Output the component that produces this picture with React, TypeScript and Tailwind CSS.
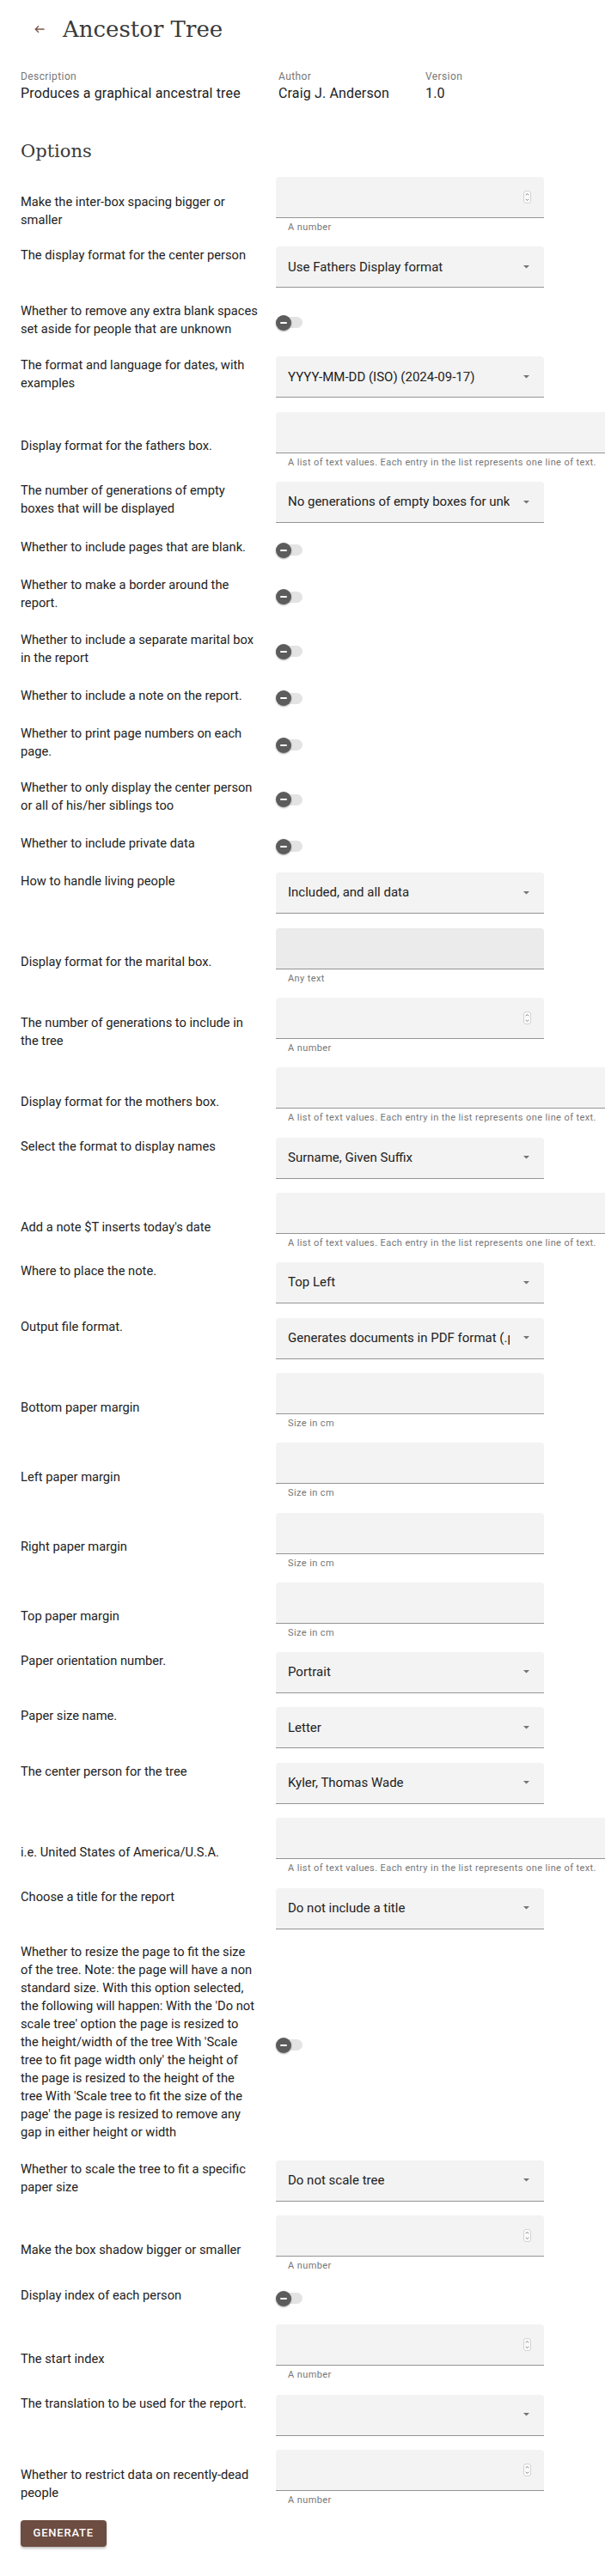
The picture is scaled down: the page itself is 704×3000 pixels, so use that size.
type Row =
  | { kind: "select"; label: string[]; value: string }
  | { kind: "switch"; label: string[] }
  | { kind: "text"; label: string[]; helper: string; wide?: boolean; hover?: boolean }
  | { kind: "number"; label: string[]; helper: string };

const LIST_HELP = "A list of text values. Each entry in the list represents one line of text.";

const ROWS: Row[] = [
  { kind: "number", label: ["Make the inter-box spacing bigger or", "smaller"], helper: "A number" },
  { kind: "select", label: ["The display format for the center person"], value: "Use Fathers Display format" },
  { kind: "switch", label: ["Whether to remove any extra blank spaces", "set aside for people that are unknown"] },
  { kind: "select", label: ["The format and language for dates, with", "examples"], value: "YYYY-MM-DD (ISO) (2024-09-17)" },
  { kind: "text", label: ["Display format for the fathers box."], helper: LIST_HELP, wide: true },
  {
    kind: "select",
    label: ["The number of generations of empty", "boxes that will be displayed"],
    value: "No generations of empty boxes for unknown ancestors",
  },
  { kind: "switch", label: ["Whether to include pages that are blank."] },
  { kind: "switch", label: ["Whether to make a border around the", "report."] },
  { kind: "switch", label: ["Whether to include a separate marital box", "in the report"] },
  { kind: "switch", label: ["Whether to include a note on the report."] },
  { kind: "switch", label: ["Whether to print page numbers on each", "page."] },
  { kind: "switch", label: ["Whether to only display the center person", "or all of his/her siblings too"] },
  { kind: "switch", label: ["Whether to include private data"] },
  { kind: "select", label: ["How to handle living people"], value: "Included, and all data" },
  { kind: "text", label: ["Display format for the marital box."], helper: "Any text", hover: true },
  { kind: "number", label: ["The number of generations to include in", "the tree"], helper: "A number" },
  { kind: "text", label: ["Display format for the mothers box."], helper: LIST_HELP, wide: true },
  { kind: "select", label: ["Select the format to display names"], value: "Surname, Given Suffix" },
  { kind: "text", label: ["Add a note $T inserts today's date"], helper: LIST_HELP, wide: true },
  { kind: "select", label: ["Where to place the note."], value: "Top Left" },
  { kind: "select", label: ["Output file format."], value: "Generates documents in PDF format (.pdf)" },
  { kind: "text", label: ["Bottom paper margin"], helper: "Size in cm" },
  { kind: "text", label: ["Left paper margin"], helper: "Size in cm" },
  { kind: "text", label: ["Right paper margin"], helper: "Size in cm" },
  { kind: "text", label: ["Top paper margin"], helper: "Size in cm" },
  { kind: "select", label: ["Paper orientation number."], value: "Portrait" },
  { kind: "select", label: ["Paper size name."], value: "Letter" },
  { kind: "select", label: ["The center person for the tree"], value: "Kyler, Thomas Wade" },
  { kind: "text", label: ["i.e. United States of America/U.S.A."], helper: LIST_HELP, wide: true },
  { kind: "select", label: ["Choose a title for the report"], value: "Do not include a title" },
  {
    kind: "switch",
    label: [
      "Whether to resize the page to fit the size",
      "of the tree. Note: the page will have a non",
      "standard size. With this option selected,",
      "the following will happen: With the 'Do not",
      "scale tree' option the page is resized to",
      "the height/width of the tree With 'Scale",
      "tree to fit page width only' the height of",
      "the page is resized to the height of the",
      "tree With 'Scale tree to fit the size of the",
      "page' the page is resized to remove any",
      "gap in either height or width",
    ],
  },
  { kind: "select", label: ["Whether to scale the tree to fit a specific", "paper size"], value: "Do not scale tree" },
  { kind: "number", label: ["Make the box shadow bigger or smaller"], helper: "A number" },
  { kind: "switch", label: ["Display index of each person"] },
  { kind: "number", label: ["The start index"], helper: "A number" },
  { kind: "select", label: ["The translation to be used for the report."], value: "" },
  { kind: "number", label: ["Whether to restrict data on recently-dead", "people"], helper: "A number" },
];

function Label({ lines }: { lines: string[] }) {
  return (
    <div className="w-[293px] shrink-0 text-[14.7px] leading-[21px] text-[#222]">
      {lines.map((l) => (
        <span key={l} className="block whitespace-nowrap">
          {l}
        </span>
      ))}
    </div>
  );
}

function DropArrow() {
  return (
    <svg width="7" height="4" viewBox="0 0 7 4" className="shrink-0">
      <path d="M0 0h7L3.5 3.6z" fill="#737373" />
    </svg>
  );
}

function Spinner() {
  return (
    <svg width="9" height="15" viewBox="0 0 9 15">
      <rect x="0.5" y="0.5" width="8" height="14" rx="2.5" fill="#fafafa" stroke="#d4d4d4" />
      <path d="M2.8 5.2 4.5 3.6 6.2 5.2" fill="none" stroke="#777" strokeWidth="0.9" />
      <path d="M2.8 9.8 4.5 11.4 6.2 9.8" fill="none" stroke="#777" strokeWidth="0.9" />
    </svg>
  );
}

function Toggle() {
  return (
    <div className="relative w-[31px] h-[18px]">
      <div className="absolute left-[6px] right-0 top-[2.5px] h-[13px] rounded-full bg-[#e3e3e3]" />
      <div className="absolute left-0 top-0 w-[18px] h-[18px] rounded-full bg-[#5c5c5c] shadow-[0_1px_2px_rgba(0,0,0,0.35)] flex items-center justify-center">
        <div className="w-[8px] h-[2px] rounded-sm bg-white" />
      </div>
    </div>
  );
}

function OptionRow({ row }: { row: Row }) {
  if (row.kind === "select") {
    return (
      <div className="flex items-start mb-[16.5px]">
        <Label lines={row.label} />
        <div className="ml-[4px] w-[312px] h-[48px] rounded-t-[4px] bg-[#f3f3f3] border-b border-[#949494] flex items-center pl-[14px] pr-[17px]">
          <span className="w-[258px] overflow-hidden whitespace-nowrap text-[15px] text-[#222]">{row.value}</span>
          <span className="ml-auto flex">
            <DropArrow />
          </span>
        </div>
      </div>
    );
  }

  if (row.kind === "switch") {
    return (
      <div className="flex items-center min-h-[24px] mb-[21.5px]">
        <Label lines={row.label} />
        <div className="ml-[4px] mt-[6px]">
          <Toggle />
        </div>
      </div>
    );
  }

  const isNumber = row.kind === "number";
  const wide = row.kind === "text" && row.wide;
  const hover = row.kind === "text" && row.hover;

  return (
    <div className={`flex ${isNumber ? "mb-[1.5px]" : "mb-[1.2px]"}`}>
      <div className="h-[80px] flex items-center">
        <Label lines={row.label} />
      </div>
      <div className="ml-[4px]">
        <div
          className={`h-[48px] rounded-t-[4px] border-b border-[#949494] flex items-center justify-end pr-[15px] ${
            wide ? "w-[400px]" : "w-[312px]"
          } ${hover ? "bg-[#ebebeb]" : "bg-[#f3f3f3]"}`}
        >
          {isNumber && <Spinner />}
        </div>
        <p className="mt-[3px] pl-[14px] text-[11px] leading-[16px] tracking-[0.4px] text-[#777] whitespace-nowrap">
          {row.helper}
        </p>
      </div>
    </div>
  );
}

export default function App() {
  return (
    <div className="w-full overflow-hidden bg-white font-['Roboto',sans-serif] px-[24px] pt-[17px] pb-[34px]">
      <div className="flex items-center h-[34px]">
        <svg width="12" height="10" viewBox="0 0 12 10" className="ml-[15.5px]">
          <path d="M11.5 5H1.2M5 1.2 1.2 5 5 8.8" fill="none" stroke="#795548" strokeWidth="1.3" />
        </svg>
        <h1 className="ml-[21.5px] font-['DejaVu_Serif',serif] text-[26px] leading-[34px] font-normal text-[#3a3a3a]">
          Ancestor Tree
        </h1>
      </div>

      <div className="mt-[29.5px] flex">
        <div className="w-[300px]">
          <div className="text-[12px] leading-[17px] tracking-[0.4px] text-[#777]">Description</div>
          <div className="text-[16px] leading-[21px] tracking-[0.15px] text-[#222]">Produces a graphical ancestral tree</div>
        </div>
        <div className="w-[171px]">
          <div className="text-[12px] leading-[17px] tracking-[0.4px] text-[#777]">Author</div>
          <div className="text-[16px] leading-[21px] tracking-[0.15px] text-[#222]">Craig J. Anderson</div>
        </div>
        <div>
          <div className="text-[12px] leading-[17px] tracking-[0.4px] text-[#777]">Version</div>
          <div className="text-[16px] leading-[21px] tracking-[0.15px] text-[#222]">1.0</div>
        </div>
      </div>

      <h2 className="mt-[43.2px] font-['DejaVu_Serif',serif] text-[21px] leading-[28px] font-normal text-[#3a3a3a]">
        Options
      </h2>

      <div className="mt-[16.3px]">
        {ROWS.map((r, i) => (
          <OptionRow key={i} row={r} />
        ))}
      </div>

      <button className="w-[99.5px] h-[31px] rounded-[4px] bg-[#6d4c41] text-white text-[13px] font-medium tracking-[0.8px] uppercase shadow-[0_2px_3px_rgba(0,0,0,0.25)]">
        Generate
      </button>
    </div>
  );
}
